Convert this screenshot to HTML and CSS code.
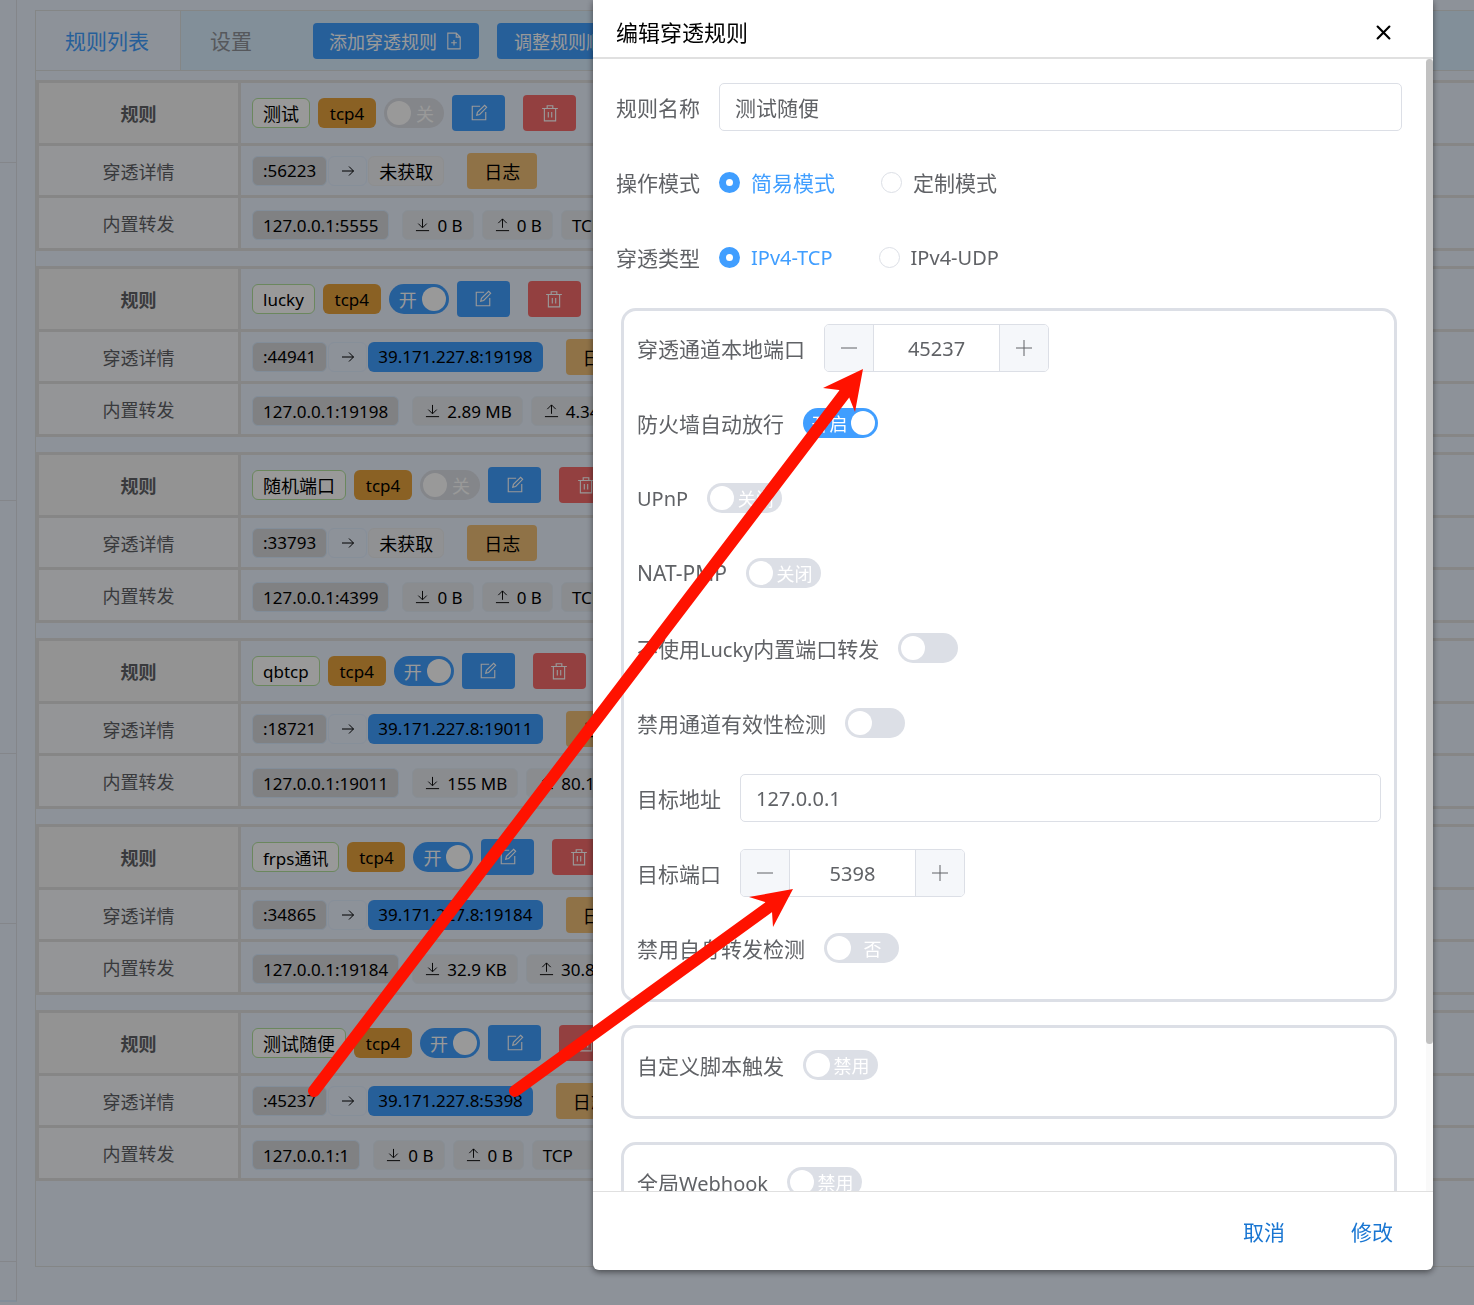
FILE: index.html
```
<!DOCTYPE html>
<html lang="zh-CN">
<head>
    <meta charset="UTF-8">
    <meta name="viewport" content="width=device-width, initial-scale=1.0">
    <title>穿透规则</title>
    <link rel="stylesheet" href="styles.css">
</head>
<body>

    <!-- Icon sprites -->
    <svg class="sprites" aria-hidden="true">
        <symbol id="i-edit" viewBox="0 0 16 16"><path d="M9 2H2v12h12V7M6 10l.6-2.6L13 1.2l1.8 1.8-6.2 6.3z"/></symbol>
        <symbol id="i-trash" viewBox="0 0 16 16"><path d="M1 4h14M5.500 4V1.500h5V4M3 4v11h10V4M6.500 7v5M9.500 7v5"/></symbol>
        <symbol id="i-add" viewBox="0 0 16 16"><path d="M10 1H2.500v14h11V4.500zM10 1v3.500h3.500M8 7v5M5.500 9.500h5"/></symbol>
        <symbol id="i-right" viewBox="0 0 16 16"><path d="M2 8h11.500M9 3.500L13.500 8 9 12.500"/></symbol>
        <symbol id="i-down" viewBox="0 0 16 16"><path d="M8 1.500v9M3.500 6.500L8 11l4.500-4.500M1 14h14"/></symbol>
        <symbol id="i-up" viewBox="0 0 16 16"><path d="M8 11V1.500M3.500 6L8 1.500 12.500 6M1 14h14"/></symbol>
        <symbol id="i-minus" viewBox="0 0 16 16"><path d="M0 8h16"/></symbol>
        <symbol id="i-plus" viewBox="0 0 16 16"><path d="M0 8h16M8 0v16"/></symbol>
    </svg>

    <div class="layout">
        <aside class="sidebar">
            <div class="side-block first"></div>
            <div class="side-block large"></div>
            <div class="side-block medium"></div>
            <div class="side-block small"></div>
            <div class="side-block large"></div>
            <div class="side-block last"></div>
        </aside>

        <main class="panel">
            <nav class="tabs">
                <a class="tab active" href="#rules">规则列表</a>
                <a class="tab" href="#settings">设置</a>
                <button class="btn primary add">添加穿透规则 <svg class="icon"><use href="#i-add"/></svg></button>
                <button class="btn primary">调整规则顺序</button>
            </nav>

            <table class="rule">
                <tr>
                    <th>规则</th>
                    <td><div class="line">
                        <span class="tag name">测试</span>
                        <span class="tag type">tcp4</span>
                        <label class="switch"><input type="checkbox" aria-label="启用 测试"><span class="slider">关</span></label>
                        <button class="btn primary square" aria-label="编辑"><svg class="icon"><use href="#i-edit"/></svg></button>
                        <button class="btn danger square" aria-label="删除"><svg class="icon"><use href="#i-trash"/></svg></button>
                    </div></td>
                </tr>
                <tr>
                    <th>穿透详情</th>
                    <td><div class="line tight">
                        <span class="tag gray">:56223</span>
                        <span class="tag arrow"><svg class="icon"><use href="#i-right"/></svg></span>
                        <span class="tag none">未获取</span>
                        <button class="btn log">日志</button>
                    </div></td>
                </tr>
                <tr>
                    <th>内置转发</th>
                    <td><div class="line">
                        <span class="tag gray target">127.0.0.1:5555</span>
                        <span class="tag flow"><svg class="icon"><use href="#i-down"/></svg>0 B</span>
                        <span class="tag flow"><svg class="icon"><use href="#i-up"/></svg>0 B</span>
                        <span class="tag flow">TCP</span>
                    </div></td>
                </tr>
            </table>

            <table class="rule">
                <tr>
                    <th>规则</th>
                    <td><div class="line">
                        <span class="tag name latin">lucky</span>
                        <span class="tag type">tcp4</span>
                        <label class="switch"><input type="checkbox" aria-label="启用 lucky" checked><span class="slider">开</span></label>
                        <button class="btn primary square" aria-label="编辑"><svg class="icon"><use href="#i-edit"/></svg></button>
                        <button class="btn danger square" aria-label="删除"><svg class="icon"><use href="#i-trash"/></svg></button>
                    </div></td>
                </tr>
                <tr>
                    <th>穿透详情</th>
                    <td><div class="line tight">
                        <span class="tag gray">:44941</span>
                        <span class="tag arrow"><svg class="icon"><use href="#i-right"/></svg></span>
                        <span class="tag public">39.171.227.8:19198</span>
                        <button class="btn log">日志</button>
                    </div></td>
                </tr>
                <tr>
                    <th>内置转发</th>
                    <td><div class="line">
                        <span class="tag gray target">127.0.0.1:19198</span>
                        <span class="tag flow"><svg class="icon"><use href="#i-down"/></svg>2.89 MB</span>
                        <span class="tag flow"><svg class="icon"><use href="#i-up"/></svg>4.34 MB</span>
                        <span class="tag flow">TCP</span>
                    </div></td>
                </tr>
            </table>

            <table class="rule">
                <tr>
                    <th>规则</th>
                    <td><div class="line">
                        <span class="tag name">随机端口</span>
                        <span class="tag type">tcp4</span>
                        <label class="switch"><input type="checkbox" aria-label="启用 随机端口"><span class="slider">关</span></label>
                        <button class="btn primary square" aria-label="编辑"><svg class="icon"><use href="#i-edit"/></svg></button>
                        <button class="btn danger square" aria-label="删除"><svg class="icon"><use href="#i-trash"/></svg></button>
                    </div></td>
                </tr>
                <tr>
                    <th>穿透详情</th>
                    <td><div class="line tight">
                        <span class="tag gray">:33793</span>
                        <span class="tag arrow"><svg class="icon"><use href="#i-right"/></svg></span>
                        <span class="tag none">未获取</span>
                        <button class="btn log">日志</button>
                    </div></td>
                </tr>
                <tr>
                    <th>内置转发</th>
                    <td><div class="line">
                        <span class="tag gray target">127.0.0.1:4399</span>
                        <span class="tag flow"><svg class="icon"><use href="#i-down"/></svg>0 B</span>
                        <span class="tag flow"><svg class="icon"><use href="#i-up"/></svg>0 B</span>
                        <span class="tag flow">TCP</span>
                    </div></td>
                </tr>
            </table>

            <table class="rule">
                <tr>
                    <th>规则</th>
                    <td><div class="line">
                        <span class="tag name latin">qbtcp</span>
                        <span class="tag type">tcp4</span>
                        <label class="switch"><input type="checkbox" aria-label="启用 qbtcp" checked><span class="slider">开</span></label>
                        <button class="btn primary square" aria-label="编辑"><svg class="icon"><use href="#i-edit"/></svg></button>
                        <button class="btn danger square" aria-label="删除"><svg class="icon"><use href="#i-trash"/></svg></button>
                    </div></td>
                </tr>
                <tr>
                    <th>穿透详情</th>
                    <td><div class="line tight">
                        <span class="tag gray">:18721</span>
                        <span class="tag arrow"><svg class="icon"><use href="#i-right"/></svg></span>
                        <span class="tag public">39.171.227.8:19011</span>
                        <button class="btn log">日志</button>
                    </div></td>
                </tr>
                <tr>
                    <th>内置转发</th>
                    <td><div class="line">
                        <span class="tag gray target">127.0.0.1:19011</span>
                        <span class="tag flow"><svg class="icon"><use href="#i-down"/></svg>155 MB</span>
                        <span class="tag flow"><svg class="icon"><use href="#i-up"/></svg>80.1 MB</span>
                        <span class="tag flow">TCP</span>
                    </div></td>
                </tr>
            </table>

            <table class="rule">
                <tr>
                    <th>规则</th>
                    <td><div class="line">
                        <span class="tag name latin">frps通讯</span>
                        <span class="tag type">tcp4</span>
                        <label class="switch"><input type="checkbox" aria-label="启用 frps通讯" checked><span class="slider">开</span></label>
                        <button class="btn primary square" aria-label="编辑"><svg class="icon"><use href="#i-edit"/></svg></button>
                        <button class="btn danger square" aria-label="删除"><svg class="icon"><use href="#i-trash"/></svg></button>
                    </div></td>
                </tr>
                <tr>
                    <th>穿透详情</th>
                    <td><div class="line tight">
                        <span class="tag gray">:34865</span>
                        <span class="tag arrow"><svg class="icon"><use href="#i-right"/></svg></span>
                        <span class="tag public">39.171.227.8:19184</span>
                        <button class="btn log">日志</button>
                    </div></td>
                </tr>
                <tr>
                    <th>内置转发</th>
                    <td><div class="line">
                        <span class="tag gray target">127.0.0.1:19184</span>
                        <span class="tag flow"><svg class="icon"><use href="#i-down"/></svg>32.9 KB</span>
                        <span class="tag flow"><svg class="icon"><use href="#i-up"/></svg>30.8 KB</span>
                        <span class="tag flow">TCP</span>
                    </div></td>
                </tr>
            </table>

            <table class="rule">
                <tr>
                    <th>规则</th>
                    <td><div class="line">
                        <span class="tag name">测试随便</span>
                        <span class="tag type">tcp4</span>
                        <label class="switch"><input type="checkbox" aria-label="启用 测试随便" checked><span class="slider">开</span></label>
                        <button class="btn primary square" aria-label="编辑"><svg class="icon"><use href="#i-edit"/></svg></button>
                        <button class="btn danger square" aria-label="删除"><svg class="icon"><use href="#i-trash"/></svg></button>
                    </div></td>
                </tr>
                <tr>
                    <th>穿透详情</th>
                    <td><div class="line tight">
                        <span class="tag gray">:45237</span>
                        <span class="tag arrow"><svg class="icon"><use href="#i-right"/></svg></span>
                        <span class="tag public">39.171.227.8:5398</span>
                        <button class="btn log">日志</button>
                    </div></td>
                </tr>
                <tr>
                    <th>内置转发</th>
                    <td><div class="line">
                        <span class="tag gray target">127.0.0.1:1</span>
                        <span class="tag flow"><svg class="icon"><use href="#i-down"/></svg>0 B</span>
                        <span class="tag flow"><svg class="icon"><use href="#i-up"/></svg>0 B</span>
                        <span class="tag flow wide">TCP</span>
                    </div></td>
                </tr>
            </table>
        </main>
    </div>

    <!-- Edit dialog -->
    <div class="overlay">
        <form class="dialog" role="dialog" aria-labelledby="dialog-title">
            <header class="dialog-header">
                <h2 id="dialog-title">编辑穿透规则</h2>
                <button type="button" class="close" aria-label="关闭"><svg viewBox="0 0 14 14"><path d="M1.500 1.500l11 11M12.500 1.500l-11 11"/></svg></button>
            </header>

            <div class="dialog-body">
                <div class="field">
                    <label for="rule-name">规则名称</label>
                    <input class="text-input" type="text" id="rule-name" value="测试随便">
                </div>
                <div class="field">
                    <span class="label">操作模式</span>
                    <label class="radio"><input type="radio" name="mode" checked><span>简易模式</span></label>
                    <label class="radio"><input type="radio" name="mode"><span>定制模式</span></label>
                </div>
                <div class="field">
                    <span class="label">穿透类型</span>
                    <label class="radio latin"><input type="radio" name="type" checked><span>IPv4-TCP</span></label>
                    <label class="radio latin"><input type="radio" name="type"><span>IPv4-UDP</span></label>
                </div>

                <section class="group">
                    <div class="field">
                        <label for="local-port">穿透通道本地端口</label>
                        <div class="stepper">
                            <button type="button" aria-label="减少"><svg class="icon"><use href="#i-minus"/></svg></button>
                            <input type="text" id="local-port" value="45237">
                            <button type="button" aria-label="增加"><svg class="icon"><use href="#i-plus"/></svg></button>
                        </div>
                    </div>
                    <div class="field">
                        <label for="firewall">防火墙自动放行</label>
                        <label class="switch wide"><input type="checkbox" id="firewall" checked><span class="slider">开启</span></label>
                    </div>
                    <div class="field">
                        <label class="latin" for="upnp">UPnP</label>
                        <label class="switch wide"><input type="checkbox" id="upnp"><span class="slider">关闭</span></label>
                    </div>
                    <div class="field">
                        <label for="natpmp">NAT-PMP</label>
                        <label class="switch wide"><input type="checkbox" id="natpmp"><span class="slider">关闭</span></label>
                    </div>
                    <div class="field">
                        <label for="no-forward">不使用<span class="latin">Lucky</span>内置端口转发</label>
                        <label class="switch"><input type="checkbox" id="no-forward"><span class="slider"></span></label>
                    </div>
                    <div class="field">
                        <label for="no-check">禁用通道有效性检测</label>
                        <label class="switch"><input type="checkbox" id="no-check"><span class="slider"></span></label>
                    </div>
                    <div class="field">
                        <label for="target-addr">目标地址</label>
                        <input class="text-input latin" type="text" id="target-addr" value="127.0.0.1">
                    </div>
                    <div class="field">
                        <label for="target-port">目标端口</label>
                        <div class="stepper">
                            <button type="button" aria-label="减少"><svg class="icon"><use href="#i-minus"/></svg></button>
                            <input type="text" id="target-port" value="5398">
                            <button type="button" aria-label="增加"><svg class="icon"><use href="#i-plus"/></svg></button>
                        </div>
                    </div>
                    <div class="field">
                        <label for="no-self">禁用自身转发检测</label>
                        <label class="switch wide"><input type="checkbox" id="no-self"><span class="slider">否</span></label>
                    </div>
                </section>

                <section class="group">
                    <div class="field">
                        <label for="script">自定义脚本触发</label>
                        <label class="switch wide"><input type="checkbox" id="script"><span class="slider">禁用</span></label>
                    </div>
                </section>

                <section class="group">
                    <div class="field">
                        <label for="webhook">全局<span class="latin">Webhook</span></label>
                        <label class="switch wide"><input type="checkbox" id="webhook"><span class="slider">禁用</span></label>
                    </div>
                </section>

                <div class="scrollbar"><div class="thumb"></div></div>
            </div>

            <footer class="dialog-footer">
                <button type="button" class="text-btn">取消</button>
                <button type="button" class="text-btn">修改</button>
            </footer>
        </form>
    </div>

    <!-- Arrows from the rule row to the port fields -->
    <svg class="arrows" width="900" height="1120" aria-hidden="true">
        <path class="shaft" d="M314 1091L845 393M515 1091L769 907"/>
        <path class="head" d="M863 369L823 388L839 390L849 397L855 412Z"/>
        <path class="head" d="M793 889L749 897L765 902L772 912L773 927Z"/>
    </svg>

</body>
</html>
```
FILE: styles.css
```
/* General Styles */
* {
    box-sizing: border-box;
}

body {
    margin: 0;
    height: 100vh;
    overflow: hidden;
    position: relative;
    background: #ebf3ff;
    color: #606266;
    font-family: "Noto Sans", "Noto Sans CJK SC", sans-serif;
    font-size: 18px;
}

button,
input {
    font-family: inherit;
    font-size: inherit;
}

.sprites {
    position: absolute;
    width: 0;
    height: 0;
}

.icon {
    width: 16px;
    height: 16px;
    flex: none;
    fill: none;
    stroke: currentColor;
    stroke-width: 1;
}

.layout {
    display: flex;
    gap: 18px;
    height: 100%;
}

/* Sidebar */
.sidebar {
    flex: none;
    width: 17px;
    height: 1302px;
    border-right: 1px solid #dcdfe6;
    border-bottom: 2px solid #d9ecff;
}

.side-block {
    border-bottom: 1px solid #dcdfe6;
}

.side-block.first { height: 163px; }
.side-block.large { height: 338px; }
.side-block.medium { height: 253px; }
.side-block.small { height: 170px; }
.side-block.last { border-bottom: none; }

/* Rule list */
.panel {
    flex: 1;
    min-width: 0;
    margin: 10px 0 38px;
    border: 1px solid #dcdfe0;
    border-right: none;
    overflow: hidden;
}

.tabs {
    display: flex;
    align-items: center;
    height: 60px;
    margin-bottom: 9px;
    background: #d9eeff;
    border-bottom: 1px solid #dcdfe0;
}

.tab {
    display: flex;
    align-items: center;
    height: 59px;
    padding: 0 31px 2px 29px;
    color: #909399;
    font-size: 21px;
    text-decoration: none;
}

.tab.active {
    background: #ebf3ff;
    border-right: 1px solid #dcdfe0;
    color: #409eff;
}

.btn {
    display: flex;
    align-items: center;
    justify-content: center;
    gap: 8px;
    height: 36px;
    padding: 0 17px;
    border: none;
    border-radius: 4px;
    color: #fff;
    white-space: nowrap;
}

.btn.primary {
    background: #409eff;
}

.btn.danger {
    background: #f56c6c;
}

.btn.log {
    margin-left: 22px;
    background: #eebe77;
    color: #000;
}

.btn.square {
    width: 53px;
    padding: 0;
}

.btn.square + .square {
    margin-left: 10px;
}

.btn.add {
    margin: 0 18px 0 30px;
    padding: 0 16px;
}

.btn .icon {
    width: 18px;
    height: 18px;
}

.rule {
    width: calc(100% + 3px);
    margin-bottom: 15px;
    border-spacing: 3px;
    background: #dfdfe0;
}

.rule th,
.rule td {
    height: 49px;
    padding: 0;
}

.rule th {
    width: 199px;
    background: #f7f9fc;
    font-weight: normal;
}

.rule td {
    padding-left: 11px;
    background: #ebf3ff;
}

.rule tr:first-child th {
    height: 60px;
    background: #f6f6f6;
    font-weight: bold;
}

.rule tr:last-child th {
    height: 50px;
}

.rule tr:last-child td {
    padding-top: 4px;
}

.line {
    display: flex;
    align-items: center;
    gap: 8px;
}

.line.tight {
    gap: 1px;
}

/* Tags */
.tag {
    display: flex;
    align-items: center;
    gap: 7px;
    height: 30px;
    padding: 0 10px;
    border: 1px solid transparent;
    border-radius: 6px;
    color: #000;
    font-size: 17px;
    white-space: nowrap;
}

.tag.name {
    background: #fff;
    border-color: #b3e19d;
    font-size: 18px;
}

.tag.name.latin {
    font-size: 17px;
}

.tag.type {
    padding: 0 11px;
    background: #e6a23c;
    border: none;
    width: 58px;
    justify-content: center;
}

.tag.gray {
    background: #d6d7da;
    border-color: #d9ecff;
}

.tag.arrow {
    justify-content: center;
    width: 39px;
    border-color: #e0eeff;
}

.tag.none {
    background: #f0f2f5;
    border-color: #ecedef;
    font-size: 18px;
}

.tag.public {
    padding: 0 9px;
    background: #409eff;
}

.tag.flow {
    background: #e6e9ee;
    border-color: #e3edf7;
}

.tag.flow .icon {
    margin-left: 2px;
    width: 15px;
}

.tag.target {
    margin-right: 5px;
}

.tag.wide {
    width: 80px;
}

/* Switches */
.switch {
    position: relative;
    flex: none;
    width: 60px;
    height: 30px;
}

.switch.wide {
    width: 75px;
}

.switch input {
    position: absolute;
    opacity: 0;
}

.slider {
    display: flex;
    align-items: center;
    justify-content: center;
    height: 30px;
    padding: 0 5px 0 27px;
    border-radius: 15px;
    background: #dcdfe6;
    color: #fff;
    font-size: 18px;
}

.slider:before {
    content: "";
    position: absolute;
    top: 3px;
    left: 3px;
    width: 24px;
    height: 24px;
    border-radius: 50%;
    background: #fff;
}

input:checked + .slider {
    padding: 0 27px 0 5px;
    background: #409eff;
}

input:checked + .slider:before {
    left: auto;
    right: 3px;
}

/* Dialog */
.overlay {
    position: fixed;
    inset: 0;
    display: flex;
    justify-content: flex-end;
    padding: 0 41px 35px;
    background: rgba(0, 0, 0, 0.4);
}

.dialog {
    display: flex;
    flex-direction: column;
    width: 100%;
    max-width: 840px;
    background: #fff;
    border-radius: 0 0 6px 6px;
    box-shadow: 0 2px 6px rgba(0, 0, 0, 0.5);
    font-size: 21px;
}

.dialog-header {
    display: flex;
    align-items: center;
    justify-content: space-between;
    flex: none;
    height: 59px;
    padding: 8px 42px 0 23px;
    border-bottom: 2px solid #e0e0e0;
}

.dialog-header h2 {
    margin: 0;
    padding-bottom: 4px;
    color: #000;
    font-size: 22px;
    font-weight: normal;
}

.close {
    display: flex;
    padding: 0;
    border: none;
    background: none;
}

.close svg {
    width: 15px;
    height: 15px;
    stroke: #000;
    stroke-width: 2;
    stroke-linecap: round;
}

.dialog-body {
    position: relative;
    flex: 1;
    min-height: 0;
    padding: 24px 31px 0 23px;
    overflow: hidden;
}

.field {
    display: flex;
    align-items: center;
    height: 48px;
    margin-bottom: 27px;
    gap: 19px;
}

.field label,
.field .label {
    flex: none;
}

.dialog .latin {
    font-size: 20px;
}

.text-input {
    flex: 1;
    min-width: 0;
    height: 48px;
    padding: 0 15px;
    border: 1px solid #dcdfe6;
    border-radius: 5px;
    background: #fff;
    color: #606266;
}

.radio {
    display: flex;
    align-items: center;
    gap: 11px;
    margin-right: 27px;
}

.radio input {
    appearance: none;
    width: 21px;
    height: 21px;
    margin: 0;
    border: 1px solid #dcdfe6;
    border-radius: 50%;
}

.radio input:checked {
    border: 7px solid #409eff;
}

.radio input:checked + span {
    color: #409eff;
}

.group {
    margin: 0 5px 23px 5px;
    padding: 13px 13px 0 13px;
    border: 3px solid #dcdfe6;
    border-radius: 15px;
}

.stepper {
    display: flex;
    width: 225px;
    height: 48px;
    border: 1px solid #dcdfe6;
    border-radius: 5px;
    overflow: hidden;
}

.stepper button {
    display: flex;
    align-items: center;
    justify-content: center;
    width: 48px;
    padding: 0;
    border: none;
    background: #f5f7fa;
    color: #606266;
}

.stepper input {
    flex: 1;
    min-width: 0;
    padding: 0;
    border: solid #dcdfe6;
    border-width: 0 1px;
    color: #606266;
    font-size: 20px;
    text-align: center;
}

.scrollbar {
    position: absolute;
    top: 0;
    right: 0;
    bottom: 0;
    width: 7px;
    background: #f9f9f9;
}

.thumb {
    height: 87%;
    border-radius: 4px;
    background: #c1c1c1;
}

.dialog-footer {
    display: flex;
    align-items: center;
    justify-content: flex-end;
    flex: none;
    gap: 42px;
    height: 79px;
    padding: 0 28px;
    border-top: 1px solid #e0e0e0;
}

.text-btn {
    padding: 0 12px;
    border: none;
    background: none;
    color: #1976d2;
}

/* Arrows */
.arrows {
    position: absolute;
    top: 0;
    left: 0;
    z-index: 2;
    pointer-events: none;
}

.shaft {
    stroke: #ff1200;
    stroke-width: 12;
    stroke-linecap: round;
}

.head {
    fill: #ff1200;
}
```
